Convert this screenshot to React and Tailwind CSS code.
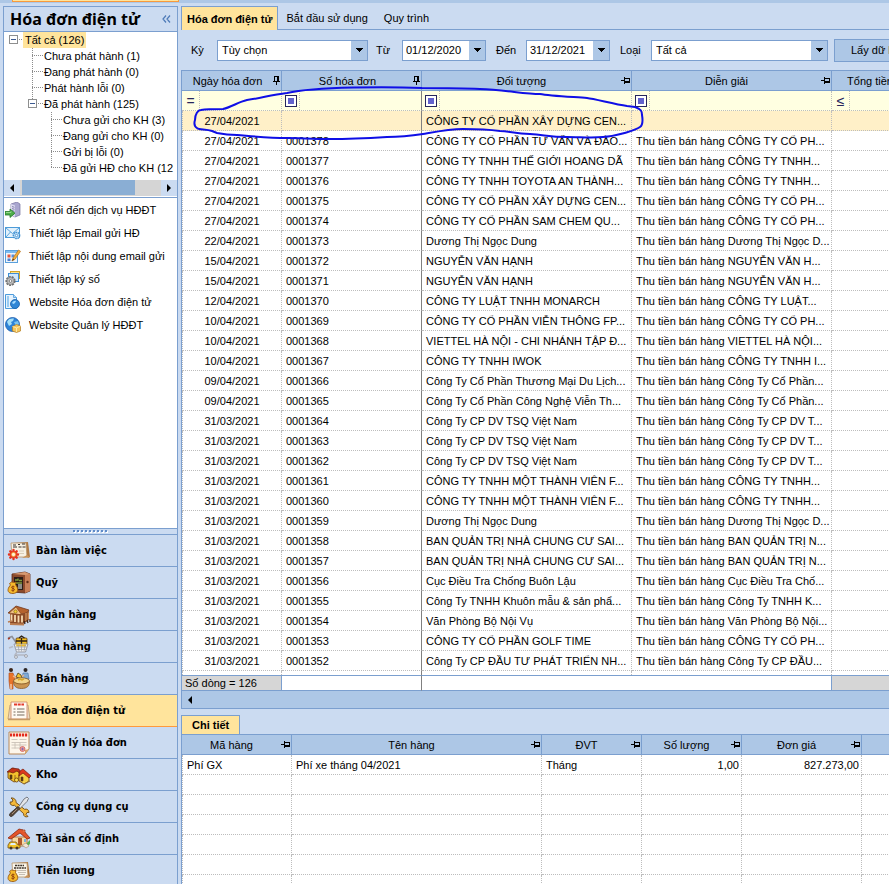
import React, { useState } from 'react';

const TREE = [
  { label: 'Tất cả (126)', level: 0, open: true },
  { label: 'Chưa phát hành (1)', level: 1 },
  { label: 'Đang phát hành (0)', level: 1 },
  { label: 'Phát hành lỗi (0)', level: 1 },
  { label: 'Đã phát hành (125)', level: 1, open: true },
  { label: 'Chưa gửi cho KH (3)', level: 2 },
  { label: 'Đang gửi cho KH (0)', level: 2 },
  { label: 'Gửi bị lỗi (0)', level: 2 },
  { label: 'Đã gửi HĐ cho KH (12', level: 2, last: true },
];

const INVOICES = [
  ['27/04/2021', '', 'CÔNG TY CỔ PHẦN XÂY DỰNG CEN...', ''],
  ['27/04/2021', '0001378', 'CÔNG TY CỔ PHẦN TƯ VẤN VÀ ĐÀO...', 'Thu tiền bán hàng CÔNG TY CỔ PH...'],
  ['27/04/2021', '0001377', 'CÔNG TY TNHH THẾ GIỚI HOANG DÃ', 'Thu tiền bán hàng CÔNG TY TNHH...'],
  ['27/04/2021', '0001376', 'CÔNG TY TNHH TOYOTA AN THÀNH...', 'Thu tiền bán hàng CÔNG TY TNHH...'],
  ['27/04/2021', '0001375', 'CÔNG TY CỔ PHẦN XÂY DỰNG CEN...', 'Thu tiền bán hàng CÔNG TY CỔ PH...'],
  ['27/04/2021', '0001374', 'CÔNG TY CỔ PHẦN SAM CHEM QU...', 'Thu tiền bán hàng CÔNG TY CỔ PH...'],
  ['22/04/2021', '0001373', 'Dương Thị Ngọc Dung', 'Thu tiền bán hàng Dương Thị Ngọc D...'],
  ['15/04/2021', '0001372', 'NGUYỄN VĂN HẠNH', 'Thu tiền bán hàng NGUYỄN VĂN H...'],
  ['15/04/2021', '0001371', 'NGUYỄN VĂN HẠNH', 'Thu tiền bán hàng NGUYỄN VĂN H...'],
  ['12/04/2021', '0001370', 'CÔNG TY LUẬT TNHH MONARCH', 'Thu tiền bán hàng CÔNG TY LUẬT...'],
  ['10/04/2021', '0001369', 'CÔNG TY CỔ PHẦN VIỄN THÔNG FP...', 'Thu tiền bán hàng CÔNG TY CỔ PH...'],
  ['10/04/2021', '0001368', 'VIETTEL HÀ NỘI - CHI NHÁNH TẬP Đ...', 'Thu tiền bán hàng VIETTEL HÀ NỘI...'],
  ['10/04/2021', '0001367', 'CÔNG TY TNHH IWOK', 'Thu tiền bán hàng CÔNG TY TNHH I...'],
  ['09/04/2021', '0001366', 'Công Ty Cổ Phần Thương Mại Du Lịch...', 'Thu tiền bán hàng Công Ty Cổ Phần...'],
  ['09/04/2021', '0001365', 'Công Ty Cổ Phần Công Nghệ Viễn Th...', 'Thu tiền bán hàng Công Ty Cổ Phần...'],
  ['31/03/2021', '0001364', 'Công Ty CP DV TSQ Việt Nam', 'Thu tiền bán hàng Công Ty CP DV T...'],
  ['31/03/2021', '0001363', 'Công Ty CP DV TSQ Việt Nam', 'Thu tiền bán hàng Công Ty CP DV T...'],
  ['31/03/2021', '0001362', 'Công Ty CP DV TSQ Việt Nam', 'Thu tiền bán hàng Công Ty CP DV T...'],
  ['31/03/2021', '0001361', 'CÔNG TY TNHH MỘT THÀNH VIÊN F...', 'Thu tiền bán hàng CÔNG TY TNHH...'],
  ['31/03/2021', '0001360', 'CÔNG TY TNHH MỘT THÀNH VIÊN F...', 'Thu tiền bán hàng CÔNG TY TNHH...'],
  ['31/03/2021', '0001359', 'Dương Thị Ngọc Dung', 'Thu tiền bán hàng Dương Thị Ngọc D...'],
  ['31/03/2021', '0001358', 'BAN QUẢN TRỊ NHÀ CHUNG CƯ SAI...', 'Thu tiền bán hàng BAN QUẢN TRỊ N...'],
  ['31/03/2021', '0001357', 'BAN QUẢN TRỊ NHÀ CHUNG CƯ SAI...', 'Thu tiền bán hàng BAN QUẢN TRỊ N...'],
  ['31/03/2021', '0001356', 'Cục Điều Tra Chống Buôn Lậu', 'Thu tiền bán hàng Cục Điều Tra Chố...'],
  ['31/03/2021', '0001355', 'Công Ty TNHH Khuôn mẫu & sản phẩ...', 'Thu tiền bán hàng Công Ty TNHH K...'],
  ['31/03/2021', '0001354', 'Văn Phòng Bộ Nội Vụ', 'Thu tiền bán hàng Văn Phòng Bộ Nội...'],
  ['31/03/2021', '0001353', 'CÔNG TY CỔ PHẦN GOLF TIME', 'Thu tiền bán hàng CÔNG TY CỔ PH...'],
  ['31/03/2021', '0001352', 'Công Ty CP ĐẦU TƯ PHÁT TRIỂN NH...', 'Thu tiền bán hàng Công Ty CP ĐẦU...'],
];

/* ---------- small icons ---------- */

const ServerIcon = () => (
  <svg viewBox="0 0 16 16" className="size-4 shrink-0">
    <path d="M6 2l6-2 3 2v11l-5 2-4-2z" fill="#a9a6cf" stroke="#77739f" strokeWidth=".7" />
    <path d="M6 2l4 1.500v11.500l-4-2z" fill="#dcdaf0" />
    <path d="M7 4.500l2.500.8M7 6.500l2.500.8M7 8.500l2.500.8" stroke="#6f6b9b" strokeWidth=".8" />
    <path d="M0 9.500h5V7l5 4.200-5 4.300V13H0z" fill="#4fae4b" stroke="#237a2a" strokeWidth=".8" />
    <path d="M1 10.500h5V9.300" stroke="#a5e19a" fill="none" strokeWidth=".8" />
  </svg>
);

const MailIcon = () => (
  <svg viewBox="0 0 16 16" className="size-4 shrink-0">
    <rect x=".5" y="2.500" width="14" height="10" fill="#e2f1fc" stroke="#4d9bd8" />
    <path d="M1 3l6.500 5.500L14 3M1 12l4.500-5M14 12l-4-5" fill="none" stroke="#4d9bd8" strokeWidth=".9" />
    <circle cx="11.500" cy="10.500" r="3.200" fill="#bcdcf5" stroke="#3f8fd0" strokeWidth="1.300" strokeDasharray="1.600 .7" />
    <circle cx="11.500" cy="10.500" r="1.200" fill="#fff" stroke="#3f8fd0" strokeWidth=".8" />
  </svg>
);

const EditMailIcon = () => (
  <svg viewBox="0 0 16 16" className="size-4 shrink-0">
    <rect x=".5" y="2.500" width="12" height="12" fill="#eef6fd" stroke="#5aa0dc" />
    <rect x="1" y="3" width="11" height="2" fill="#7dbcf0" />
    <rect x="2.500" y="6.500" width="3" height="3" fill="#e2553d" />
    <rect x="6.500" y="6.500" width="3" height="3" fill="#5b8fd8" />
    <rect x="2.500" y="10.500" width="3" height="2.500" fill="#4f7fd0" />
    <path d="M7 13l1-3 5.500-8 2 1.300-5.500 8z" fill="#f3b13c" stroke="#b3701c" strokeWidth=".7" />
    <path d="M7 13l1-2.500 1.300 1z" fill="#5a3a1c" />
  </svg>
);

const SignIcon = () => (
  <svg viewBox="0 0 16 16" className="size-4 shrink-0">
    <rect x="5.500" y=".5" width="9" height="7" fill="#ffe58a" stroke="#d4a52a" />
    <rect x="3.500" y="2.500" width="10" height="8" fill="#cfe8fb" stroke="#3f8fd6" />
    <circle cx="5.500" cy="10" r="4.300" fill="#b9b9b9" stroke="#6e6e6e" strokeWidth="1.600" strokeDasharray="2 1" />
    <circle cx="5.500" cy="10" r="3.300" fill="#c9c9c9" stroke="#777" strokeWidth=".6" />
    <circle cx="5.500" cy="10" r="1.400" fill="#fff" stroke="#666" strokeWidth=".8" />
  </svg>
);

const PageGlobeIcon = () => (
  <svg viewBox="0 0 16 16" className="size-4 shrink-0">
    <path d="M.5.500h8l3 3v11h-11z" fill="#e7f3fd" stroke="#4c9bdc" />
    <path d="M3 2v11" stroke="#7fbcec" strokeWidth="1.500" />
    <path d="M8.500.500v3h3" fill="#b9dcf7" stroke="#4c9bdc" strokeWidth=".8" />
    <circle cx="10" cy="10" r="4.500" fill="#2f86d6" stroke="#1b5fa8" strokeWidth=".8" />
    <path d="M7 9c1-2 3-2.500 4-2l-1 2-1.500 1z" fill="#a7dcff" />
  </svg>
);

const GlobeIcon = () => (
  <svg viewBox="0 0 16 16" className="size-4 shrink-0">
    <circle cx="7.500" cy="7.500" r="7" fill="#2d83d8" stroke="#1a5cab" strokeWidth=".8" />
    <path d="M2 5c1-3 4-4 7-3.500L8 4 6 5l1 2-3 2z" fill="#a6e0f7" />
    <path d="M9 5l4-1 1 3-3 2z" fill="#79c3f0" />
    <path d="M7.500 9.500l4-2 4 1.500v5l-4 1.500-4-1.500z" fill="#f5c65c" stroke="#b57d1d" strokeWidth=".7" />
    <path d="M7.500 9.500l4 1.300 4-1.500M11.500 11v4" fill="none" stroke="#fff0bd" strokeWidth=".8" />
  </svg>
);

const LINKS = [
  { label: 'Kết nối đến dịch vụ HĐĐT', Icon: ServerIcon },
  { label: 'Thiết lập Email gửi HĐ', Icon: MailIcon },
  { label: 'Thiết lập nội dung email gửi', Icon: EditMailIcon },
  { label: 'Thiết lập ký số', Icon: SignIcon },
  { label: 'Website Hóa đơn điện tử', Icon: PageGlobeIcon },
  { label: 'Website Quản lý HĐĐT', Icon: GlobeIcon },
];

/* ---------- module icons ---------- */

const MoneyBag = () => (
  <>
    <path d="M2.500 12.500l2-1.500 3 .5 1.500-.5-.5 2.500 1.500 2.500c1.500 3 1 6-4 6.500-5 0-6-3-4-6.500l1.500-2z" fill="#f6b92c" stroke="#9a5a12" strokeWidth=".9" />
    <path d="M7.500 15.800c-1-.8-3-.6-3 .6s3 .9 3 2.100-2 1.500-3.200.6M6 14.800v6" stroke="#8c3b0c" strokeWidth=".9" fill="none" />
  </>
);

const DeskIcon = () => (
  <svg viewBox="0 0 24 24" className="size-6 shrink-0">
    <path d="M5 4l16-1 2 15-2 1z" fill="#b07a45" />
    <path d="M4 4h15l1 14H5z" fill="#f7f1e4" stroke="#b89468" strokeWidth=".8" />
    <path d="M20 16l3 2-8 1z" fill="#c99256" />
    <path d="M6 6h3M11 5.500h2M15 5h3M6 8h4M11.500 8h3M15.500 8h3" stroke="#3a332c" strokeWidth="1.200" />
    <path d="M12 12h5M12 14.500h5" stroke="#d9cdb8" />
    <g stroke="#e5331d" strokeWidth="2.400" strokeLinecap="round">
      <path d="M6.500 11v9M2 15.500h9M3.300 12.300l6.400 6.400M9.700 12.300l-6.400 6.400" />
    </g>
    <circle cx="6.500" cy="15.500" r="2.200" fill="#fff3d0" stroke="#f08a2a" />
  </svg>
);

const SafeIcon = () => (
  <svg viewBox="0 0 24 24" className="size-6 shrink-0">
    <path d="M5 3l13-2 5 2v17l-5 2-13-1z" fill="#8b4a2c" stroke="#5b2a16" strokeWidth=".8" />
    <path d="M18 3l5 0v17l-5 2z" fill="#c98058" />
    <path d="M5 3l13-2 5 2-5 1z" fill="#d79a72" />
    <rect x="7" y="6" width="9" height="13" fill="#2c1c16" />
    <path d="M8 9h3v-1.500M12 9.500h3M8 12h7" stroke="#7f9a3c" strokeWidth="1.400" fill="none" />
    <rect x="11" y="13" width="4" height="5" fill="#8d8d88" />
    <circle cx="20.500" cy="11" r="1.200" fill="#5b2a16" />
    <MoneyBag />
  </svg>
);

const BankIcon = () => (
  <svg viewBox="0 0 24 24" className="size-6 shrink-0">
    <path d="M1 10L9 3l13 4-3 4z" fill="#b5622d" stroke="#74371a" strokeWidth=".8" />
    <path d="M2 10l7-6 6 8z" fill="#f0c489" stroke="#8d4a20" strokeWidth=".8" />
    <circle cx="8.500" cy="8.500" r="1.600" fill="#f3d331" stroke="#7c5b12" strokeWidth=".6" />
    <path d="M3 11h12l7-3v9l-6 4H3z" fill="#8a4a26" />
    <path d="M4.500 11.500v7M8 12v7M11.500 12.500v7M15 12.500v7" stroke="#f6dab0" strokeWidth="1.800" />
    <path d="M19 10v8M21.300 9.500v7" stroke="#d99a62" strokeWidth="1.200" />
    <path d="M1 19l4-1M3 21l14 .5" stroke="#bb7d50" strokeWidth="1.800" />
    <path d="M17 18l1 3M20 17l1 3M23 16l0 3" stroke="#3d2417" strokeWidth="1.300" />
  </svg>
);

const CartIcon = () => (
  <svg viewBox="0 0 24 24" className="size-6 shrink-0">
    <path d="M1 3l4-1.500 4 6" fill="none" stroke="#8d8f97" strokeWidth="1.500" />
    <path d="M1 4l2-1" stroke="#a33b2c" strokeWidth="1.600" />
    <rect x="9" y="3" width="11" height="8" rx="1" fill="#f3bd22" stroke="#5a3b10" strokeWidth=".8" />
    <path d="M14.500 3v8M9 6h11M12 3l2.500-2 3 2" stroke="#2c2116" strokeWidth="1.300" fill="none" />
    <path d="M7 9h14l-2.500 8h-9z" fill="#e9ebef" stroke="#8a8e98" strokeWidth=".8" />
    <path d="M9 9.500h10v2H9.500z" fill="#f3bd22" />
    <path d="M8 12h12M9 14.500h10M11 9.500l1 7M14.500 9.500v7M18 9.500l-1 7" stroke="#9ea2ac" strokeWidth=".7" />
    <path d="M10 17l-2 3h9l3 1" fill="none" stroke="#b4b8c2" strokeWidth="1.500" />
    <circle cx="9" cy="22" r="1.400" fill="#f4f5f8" stroke="#8a8e98" strokeWidth=".8" />
    <circle cx="19" cy="21" r="1.400" fill="#f4f5f8" stroke="#8a8e98" strokeWidth=".8" />
    <path d="M2 13l4-1.500" stroke="#b8bcc6" strokeWidth="1.500" />
  </svg>
);

const SaleIcon = () => (
  <svg viewBox="0 0 24 24" className="size-6 shrink-0">
    <circle cx="4" cy="3" r="2" fill="#3b2417" />
    <path d="M2 6l4 0 2 5-2 4v7H3l-1-8z" fill="#e8742a" stroke="#a8461a" strokeWidth=".6" />
    <path d="M4 22v-5" stroke="#f6d0ab" strokeWidth="1.400" />
    <circle cx="18.500" cy="3" r="2" fill="#2d2524" />
    <path d="M16 6h5l1 6h-7z" fill="#7fa9d4" stroke="#456f9e" strokeWidth=".6" />
    <path d="M6 9l4 2M17 8l-4 3" stroke="#efb489" strokeWidth="1.500" />
    <path d="M9 10l2-4 3 2 1 4z" fill="#f4c432" stroke="#4f3b11" strokeWidth=".8" />
    <ellipse cx="14.500" cy="14" rx="8" ry="3.200" fill="#f3d68c" stroke="#8a5b26" strokeWidth=".8" />
    <path d="M6.500 14.500c0 4 2 7 8 7s8-3 8-7c-3 3.400-13 3.400-16 0z" fill="#cb9550" stroke="#8a5b26" strokeWidth=".8" />
    <path d="M11 13l2-1 2 1 2-1.200" stroke="#d9a624" strokeWidth="1.400" fill="none" />
  </svg>
);

const InvoiceIcon = () => (
  <svg viewBox="0 0 24 24" className="size-6 shrink-0">
    <path d="M3 6h18l2 14H1z" fill="#ecd9c0" stroke="#b9966d" strokeWidth=".8" />
    <path d="M4 3h16v17H4z" fill="#fffaf2" stroke="#d08c6a" strokeWidth=".9" />
    <path d="M7 5.500h10" stroke="#e33b2c" strokeWidth="1.800" strokeDasharray="3 .7" />
    <path d="M6.500 10h2M6.500 13h2M6.500 16h2M10 10h7.500M10 13h7.500M10 16h7.500" stroke="#a49a90" strokeWidth="1.300" />
    <path d="M1 20.500h22" stroke="#c49a66" strokeWidth="1.500" />
  </svg>
);

const InvoiceManageIcon = () => (
  <svg viewBox="0 0 24 24" className="size-6 shrink-0">
    <path d="M2 1h20v17l-4 5H2z" fill="#fdf6ea" stroke="#b98a5a" strokeWidth="1" />
    <path d="M3 4h18" stroke="#e32a1b" strokeWidth="3" strokeDasharray="2.200 .8" />
    <path d="M4.500 8.500h6M12.500 8.500h7M4.500 11.500h15M4.500 14h15M4.500 17h10M8 11.500v6M13 11.500v6" stroke="#c5bdb2" strokeWidth=".8" />
    <circle cx="15.500" cy="18" r="2.500" fill="#f2a7a0" stroke="#cf5c55" strokeWidth=".8" />
    <path d="M14 18h3M15.500 16.500v3" stroke="#7b5fb0" strokeWidth=".8" />
    <path d="M22 18l-4 5v-4z" fill="#d8a56c" />
  </svg>
);

const WarehouseIcon = () => (
  <svg viewBox="0 0 24 24" className="size-6 shrink-0">
    <path d="M1 9l5-4 6 4v8l-5 2-6-4z" fill="#f4c12d" stroke="#6b3c0d" strokeWidth=".8" />
    <path d="M0 9l5-4 7 1 2 5-4-3-4 2-3-1z" fill="#c33318" stroke="#6d1a0b" strokeWidth=".7" />
    <path d="M12 12l3-4 7 4v6l-5 3-5-3z" fill="#f7d045" stroke="#6b3c0d" strokeWidth=".8" />
    <path d="M13 8l3-2 8 7-2 2-6-5-4 3z" fill="#dd3a1e" stroke="#7a1d0d" strokeWidth=".7" />
    <path d="M3 12h2v4H3zM8 12v5M14 14h2v4h-2z" fill="#5c3a12" stroke="#5c3a12" strokeWidth=".6" />
    <circle cx="9.500" cy="17" r="2" fill="#fadb4b" stroke="#6b3c0d" strokeWidth=".8" />
    <path d="M17 21l6-3" stroke="#8b6f3d" />
  </svg>
);

const ToolsIcon = () => (
  <svg viewBox="0 0 24 24" className="size-6 shrink-0">
    <path d="M4 3l2 2-1 2-2 0c0 3 2 4 4.500 3.300l9 8.200c0 3 2 4 4.500 3l-2-2 1-2 2 0c0-2.500-2-4-4.500-3.200L9 7.500C9.500 5 7 2.500 4 3z" fill="#f4b93a" stroke="#6c4713" strokeWidth=".9" />
    <path d="M17 4l3-2 1.500 1.500L20 6.500l-7 7-1.500-1.500z" fill="#e3e5e9" stroke="#5d6067" strokeWidth=".8" />
    <path d="M11 11.500l2 2-7.500 7.500c-2 1.500-4-.5-2.500-2.500z" fill="#5b4a3c" stroke="#2f251d" strokeWidth=".8" />
    <path d="M5 19l5-5" stroke="#a99079" strokeWidth="1" />
  </svg>
);

const AssetIcon = () => (
  <svg viewBox="0 0 24 24" className="size-6 shrink-0">
    <path d="M5 10h15v9H5z" fill="#f8dba6" stroke="#a3602a" strokeWidth=".8" />
    <path d="M1 11l11-9 4 1 7 8-3 1-7-6-9 6z" fill="#e5552a" stroke="#8e2a10" strokeWidth=".8" />
    <path d="M15 3h3v3" fill="#f08352" stroke="#8e2a10" strokeWidth=".6" />
    <path d="M11 11h4v7h-4z" fill="#b05a2a" />
    <path d="M17 12h2v3h-2z" fill="#7fb1dd" />
    <path d="M18 18l5-5v4l-4 3z" fill="#58b04b" />
    <path d="M15 18l4-2 3 3-3 2z" fill="#f2e6d4" stroke="#a78c6c" strokeWidth=".6" />
    <path d="M1 18l2-3h6l2 3h2v3H1z" fill="#f3c429" stroke="#7a5410" strokeWidth=".8" />
    <path d="M4 16h4l1 2H3z" fill="#dff1fb" />
    <circle cx="4" cy="21" r="1.500" fill="#41352a" />
    <circle cx="10" cy="21" r="1.500" fill="#41352a" />
  </svg>
);

const SalaryIcon = () => (
  <svg viewBox="0 0 24 24" className="size-6 shrink-0">
    <path d="M6 4l15-1 2 15-2 1z" fill="#b07a45" />
    <path d="M5 4h15l1 14H6z" fill="#faf5ea" stroke="#b89468" strokeWidth=".8" />
    <path d="M8 6.500h9M7 9h12" stroke="#3e352b" strokeWidth="1.300" strokeDasharray="2 .6" />
    <path d="M10 11.500h9M11 13.500h8M12 15.500h6" stroke="#b9b1a6" strokeWidth=".8" />
    <path d="M20 16l3 2-6 1z" fill="#c99256" />
    <MoneyBag />
  </svg>
);

const MODULES = [
  { label: 'Bàn làm việc', Icon: DeskIcon },
  { label: 'Quỹ', Icon: SafeIcon },
  { label: 'Ngân hàng', Icon: BankIcon },
  { label: 'Mua hàng', Icon: CartIcon },
  { label: 'Bán hàng', Icon: SaleIcon },
  { label: 'Hóa đơn điện tử', Icon: InvoiceIcon },
  { label: 'Quản lý hóa đơn', Icon: InvoiceManageIcon },
  { label: 'Kho', Icon: WarehouseIcon },
  { label: 'Công cụ dụng cụ', Icon: ToolsIcon },
  { label: 'Tài sản cố định', Icon: AssetIcon },
  { label: 'Tiền lương', Icon: SalaryIcon },
];

/* ---------- shared bits ---------- */

const PinDown = () => (
  <svg viewBox="0 0 7 9" className="h-[9px] w-[7px] shrink-0" shapeRendering="crispEdges">
    <path d="M1 0h5v1H1zM1 1h1v4H1zM4 1h2v4H4zM0 5h7v1H0zM3 6h1v3H3z" />
  </svg>
);

const PinSide = () => (
  <svg viewBox="0 0 9 7" className="h-[7px] w-[9px] shrink-0" shapeRendering="crispEdges">
    <path d="M0 3h3v1H0zM3 0h1v7H3zM4 1h5v1H4zM8 2h1v4H8zM4 4h4v2H4z" />
  </svg>
);

const Caret = () => (
  <svg viewBox="0 0 7 4" className="h-1 w-[7px]" shapeRendering="crispEdges">
    <path d="M0 0h7L3.500 4z" />
  </svg>
);

const ArrowLeft = () => (
  <svg viewBox="0 0 4 8" className="h-2 w-1"><path d="M4 0v8L0 4z" /></svg>
);

const ArrowRight = () => (
  <svg viewBox="0 0 4 8" className="h-2 w-1"><path d="M0 0v8l4-4z" /></svg>
);

// dotted guide lines in front of a tree node
function TreeGuide({ node }) {
  if (node.open) {
    return (
      <svg width={node.level === 0 ? 14 : 16} height="16" className="shrink-0" fill="none" stroke="#8c8c8c" shapeRendering="crispEdges">
        {node.level > 0 && <path d="M4.500 0v4" strokeDasharray="1 1" />}
        <rect x=".5" y="3.500" width="8" height="8" fill="#fff" stroke="#8e8f8f" />
        <path d="M2 7.500h5" stroke="#3c5a91" />
        <path d="M10 7.500h6" strokeDasharray="1 1" />
      </svg>
    );
  }
  return (
    <svg width="12" height="16" className="shrink-0" fill="none" stroke="#8c8c8c" strokeDasharray="1 1" shapeRendering="crispEdges">
      <path d={node.last ? 'M.5 0v8' : 'M.5 0v16'} />
      <path d="M0 7.500h11" />
    </svg>
  );
}

const indent = (node) => {
  if (node.level === 0) return 'pl-[5px]';
  if (node.level === 2) return 'pl-[47px]';
  return node.open ? 'pl-6' : 'pl-7';
};

function Combo({ id, value, options, className }) {
  return (
    <div className={`flex h-[21px] shrink-0 border border-[#7b9fcf] bg-white ${className}`}>
      <div className="grid w-full">
        <select id={id} defaultValue={value} className="col-start-1 row-start-1 w-full appearance-none bg-transparent pl-1 outline-none">
          {options.map((o) => <option key={o}>{o}</option>)}
        </select>
        <span className="pointer-events-none col-start-1 row-start-1 flex w-4 items-center justify-center justify-self-end bg-[#adc7e6]">
          <Caret />
        </span>
      </div>
    </div>
  );
}

function DateBox({ id, value }) {
  return (
    <div className="flex h-[21px] w-[84px] shrink-0 border border-[#7b9fcf] bg-white">
      <input id={id} type="text" defaultValue={value} className="w-0 flex-1 pl-[3px] outline-none" />
      <button type="button" aria-label="Chọn ngày" className="flex w-4 items-center justify-center bg-[#adc7e6]">
        <Caret />
      </button>
    </div>
  );
}

function HeadCell({ children, pin, className = '' }) {
  return (
    <th className={`h-[21px] border-y border-r border-[#7b9fcf] bg-[#adc7e6] p-0 font-normal ${className}`}>
      <div className="flex items-center pr-px">
        <span className="flex-1 text-center whitespace-nowrap">{children}</span>
        {pin === 'down' && <PinDown />}
        {pin === 'side' && <PinSide />}
      </div>
    </th>
  );
}

const cell = 'h-5 overflow-hidden border-b border-r border-dotted border-[#bdbdbd] p-0 px-1 whitespace-nowrap';

function FilterCell({ op, className = '' }) {
  return (
    <td className={`h-5 border-b border-r border-dotted border-[#bdbdbd] p-0 ${className}`}>
      <div className="flex h-[19px] w-[18px] items-center justify-center border-r border-dotted border-[#bdbdbd] text-sm leading-none text-[#26265c]">
        {op || (
          <span className="flex size-3 items-center justify-center border border-[#26265c] bg-white">
            <span className="size-1.5 bg-[#6262cc]" />
          </span>
        )}
      </div>
    </td>
  );
}

function Sidebar() {
  const [active, setActive] = useState('Hóa đơn điện tử');

  return (
    <aside className="flex w-[175px] shrink-0 flex-col border border-b-0 border-[#7b9fcf] bg-white">
      <div className="flex h-[25px] shrink-0 items-center justify-between border-b border-[#7b9fcf] bg-[#cbdbf1] px-1.5">
        <h1 className="font-['Noto_Sans','Open_Sans',sans-serif] text-base leading-5 font-bold whitespace-nowrap">Hóa đơn điện tử</h1>
        <button type="button" aria-label="Thu gọn">
          <svg viewBox="0 0 9 8" className="h-2 w-[9px]" fill="none" stroke="#4d7ab8" strokeWidth="1.200">
            <path d="M4 .5L1 4l3 3.500M8 .5L5 4l3 3.500" />
          </svg>
        </button>
      </div>

      <ul className="h-[148px] shrink-0 overflow-hidden">
        {TREE.map((node) => (
          <li key={node.label} className={`flex h-4 items-center whitespace-nowrap ${indent(node)}`}>
            <TreeGuide node={node} />
            <span className={node.level === 0 ? 'h-4 bg-[#ffe49c] px-0.5 leading-4' : 'leading-4'}>{node.label}</span>
          </li>
        ))}
      </ul>
      <div className="flex h-4 shrink-0 bg-[#d5d5d5]">
        <button type="button" aria-label="Cuộn trái" className="flex w-4 items-center justify-center bg-[#cbdbf1]"><ArrowLeft /></button>
        <div className="flex-1 pl-0.5">
          <div className="h-[15px] w-[81%] bg-[#8aaed4]" />
        </div>
        <button type="button" aria-label="Cuộn phải" className="flex w-4 items-center justify-center bg-[#cbdbf1]"><ArrowRight /></button>
      </div>

      <ul className="mt-px min-h-[332px] flex-1 border-y border-[#7b9fcf]">
        {LINKS.map(({ label, Icon }) => (
          <li key={label}>
            <a href="#" className="flex h-[23px] items-center gap-2 pl-px whitespace-nowrap">
              <Icon />
              {label}
            </a>
          </li>
        ))}
      </ul>

      <div className="flex h-[5px] shrink-0 items-center justify-center bg-[#cbdbf1]">
        <svg width="36" height="3" shapeRendering="crispEdges">
          <path d="M1 2h35" stroke="#fff" strokeWidth="2" strokeDasharray="2 2" />
          <path d="M0 1h35" stroke="#5f8bc9" strokeWidth="2" strokeDasharray="2 2" />
        </svg>
      </div>
      <nav className="shrink-0">
        {MODULES.map(({ label, Icon }) => (
          <button
            key={label}
            type="button"
            onClick={() => setActive(label)}
            className={`flex h-8 w-full items-center gap-[5px] border-t border-[#7b9fcf] pt-px pl-[3px] text-left font-['DejaVu_Sans_Condensed','Noto_Sans',sans-serif] font-bold whitespace-nowrap ${active === label ? 'relative bg-[#ffe49c] shadow-[0_1px_0_#ff9a3c]' : 'bg-[#cbdbf1]'}`}
          >
            <Icon />
            {label}
          </button>
        ))}
      </nav>
    </aside>
  );
}

function FilterBar() {
  return (
    <div className="flex h-10 shrink-0 items-center overflow-hidden pl-2.5 whitespace-nowrap">
      <label htmlFor="period" className="w-[26px] shrink-0">Kỳ</label>
      <Combo id="period" value="Tùy chọn" options={['Tùy chọn', 'Tháng này', 'Quý này']} className="w-[151px]" />
      <label htmlFor="from" className="w-[34px] shrink-0 pl-2">Từ</label>
      <DateBox id="from" value="01/12/2020" />
      <label htmlFor="to" className="w-10 shrink-0 pl-2.5">Đến</label>
      <DateBox id="to" value="31/12/2021" />
      <label htmlFor="kind" className="w-[41px] shrink-0 pl-2.5">Loại</label>
      <Combo id="kind" value="Tất cả" options={['Tất cả']} className="w-[177px]" />
      <button type="button" className="ml-1.5 h-[23px] shrink-0 border border-[#7b9fcf] bg-[#adc7e6] px-4">Lấy dữ liệu</button>
    </div>
  );
}

function InvoiceGrid() {
  return (
    <div className="relative shrink-0 overflow-hidden border-l border-[#7b9fcf] bg-white">
      <table className="w-full min-w-[728px] table-fixed border-separate border-spacing-0">
        <colgroup>
          <col className="w-[100px]" />
          <col className="w-[140px]" />
          <col className="w-[210px]" />
          <col className="w-[200px]" />
          <col />
        </colgroup>
        <thead>
          <tr>
            <HeadCell pin="down">Ngày hóa đơn</HeadCell>
            <HeadCell pin="down">Số hóa đơn</HeadCell>
            <HeadCell pin="side">Đối tượng</HeadCell>
            <HeadCell pin="side">Diễn giải</HeadCell>
            <HeadCell>Tổng tiền</HeadCell>
          </tr>
        </thead>
        <tbody>
          <tr className="bg-[#ffffe1]">
            <FilterCell op="=" />
            <FilterCell className="border-r-[#808080] [border-right-style:solid]" />
            <FilterCell />
            <FilterCell />
            <FilterCell op="≤" />
          </tr>
          {INVOICES.map(([date, number, customer, note], i) => (
            <tr key={i} className={i === 0 ? 'bg-[#fff0c8]' : 'bg-white'}>
              <td className={`${cell} border-l text-center`}>{date}</td>
              <td className={`${cell} border-r-[#808080] [border-right-style:solid]`}>{number}</td>
              <td className={cell}>{customer}</td>
              <td className={cell}>{note}</td>
              <td className={cell} />
            </tr>
          ))}
          <tr>
            <td className="h-1 border-x border-dotted border-[#bdbdbd] p-0" />
            <td className="border-r border-[#808080] p-0" />
            <td className="border-r border-dotted border-[#bdbdbd] p-0" />
            <td className="border-r border-dotted border-[#bdbdbd] p-0" />
            <td className="p-0" />
          </tr>
        </tbody>
        <tfoot>
          <tr>
            <td className="h-4 border-y border-r border-[#7b9fcf] bg-[#d6d6d6] p-0 pl-[3px] leading-[14px] whitespace-nowrap">Số dòng = 126</td>
            <td className="border-y border-r border-y-[#7b9fcf] border-r-[#808080] p-0" />
            <td className="border-y border-[#7b9fcf] p-0" />
            <td className="border-y border-r border-[#7b9fcf] p-0" />
            <td className="border-y border-[#7b9fcf] bg-[#d6d6d6] p-0" />
          </tr>
        </tfoot>
      </table>
      <div className="flex h-[18px] items-center border-b border-[#7b9fcf] bg-[#adc7e6] pl-1.5">
        <button type="button" aria-label="Cuộn trái"><ArrowLeft /></button>
      </div>

      {/* hand-drawn loop round the first invoice */}
      <svg width="480" height="80" viewBox="182 70 480 80" className="pointer-events-none absolute top-0 left-0" fill="none" stroke="#0f0fe6" strokeWidth="2" strokeLinejoin="round">
        <path d="M223 109C232 107 238 102 247 100C262 98 270 95 287 93C300 90 330 88 353 87.500C375 87 400 87 422 88C445 88 460 88 480 89C505 90 525 94 540 94C550 96 575 97 587 98C595 99 614 104 627 106L635 107C641 109 642 111 642 115C643 121 643 125 640 127C636 130 618 136 603 137C592 138 580 137 567 137C550 137 545 135 530 134C515 134 510 131 500 131C485 129 475 129 463 129C450 129 440 131 423 134C410 136 400 137 387 137C370 138 350 139 330 139C312 139 300 138 287 138C268 138 250 136 237 135C228 135 222 134 217 133L212 131C206 129 198 130 197 128C194 126 194 123 195 120C195 114 198 110 201 110C207 109 215 109 223 109Z" />
      </svg>
    </div>
  );
}

function DetailGrid() {
  return (
    <div className="flex-1 overflow-hidden border-l border-[#7b9fcf] bg-white">
      <table className="w-full min-w-[728px] table-fixed border-separate border-spacing-0">
        <colgroup>
          <col className="w-[110px]" />
          <col className="w-[250px]" />
          <col className="w-[100px]" />
          <col className="w-[100px]" />
          <col className="w-[120px]" />
          <col />
        </colgroup>
        <thead>
          <tr>
            <HeadCell pin="side">Mã hàng</HeadCell>
            <HeadCell pin="side">Tên hàng</HeadCell>
            <HeadCell pin="side">ĐVT</HeadCell>
            <HeadCell pin="side">Số lượng</HeadCell>
            <HeadCell pin="side">Đơn giá</HeadCell>
            <HeadCell />
          </tr>
        </thead>
        <tbody>
          <tr>
            <td className={`${cell} border-l`}>Phí GX</td>
            <td className={cell}>Phí xe tháng 04/2021</td>
            <td className={cell}>Tháng</td>
            <td className={`${cell} pr-0.5 text-right`}>1,00</td>
            <td className={`${cell} pr-0.5 text-right`}>827.273,00</td>
            <td className={cell} />
          </tr>
          {[1, 2, 3, 4, 5, 6].map((n) => (
            <tr key={n}>
              <td className={`${cell} border-l`} />
              <td className={cell} />
              <td className={cell} />
              <td className={cell} />
              <td className={cell} />
              <td className={cell} />
            </tr>
          ))}
        </tbody>
      </table>
    </div>
  );
}

export default function App() {
  return (
    <div className="flex h-screen flex-col overflow-hidden bg-[#cbdbf1] font-['Liberation_Sans',Arial,sans-serif] text-[11px] leading-4 text-black">
      <div className="flex h-[3px] shrink-0 bg-[#adc7e6] pl-3">
        <div className="h-0.5 w-[167px] border border-t-0 border-[#f79a3e] bg-[#ffe49c]" />
      </div>
      <div className="flex min-h-0 flex-1 gap-[3px] pt-[3px] pl-[3px]">
        <Sidebar />
        <main className="flex min-w-0 flex-1 flex-col">
          <div className="flex h-6 shrink-0">
            <button type="button" className="border border-b-0 border-[#7b9fcf] bg-[#ffe49c] px-[5px] font-bold whitespace-nowrap">Hóa đơn điện tử</button>
            <div className="flex flex-1 gap-4 border-b border-[#7b9fcf] pl-2 whitespace-nowrap">
              <button type="button">Bắt đầu sử dụng</button>
              <button type="button">Quy trình</button>
            </div>
          </div>
          <FilterBar />
          <InvoiceGrid />
          <div className="mt-1.5 flex h-[19px] shrink-0">
            <button type="button" className="border border-b-0 border-[#7b9fcf] bg-[#ffe49c] px-2.5 font-bold">Chi tiết</button>
            <div className="flex-1" />
          </div>
          <DetailGrid />
        </main>
      </div>
    </div>
  );
}
